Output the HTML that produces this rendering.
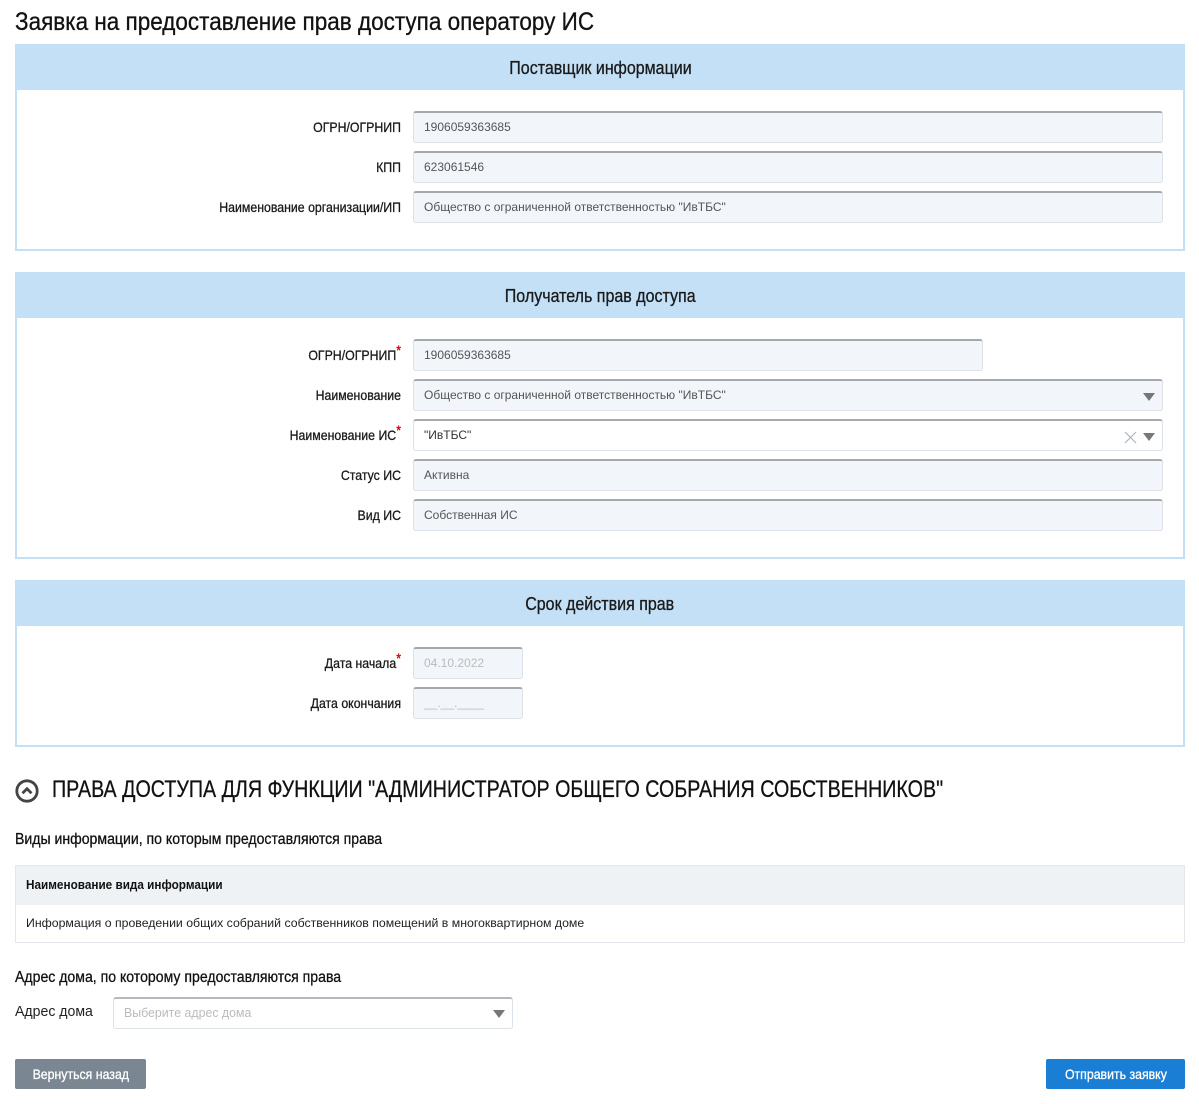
<!DOCTYPE html>
<html><head><meta charset="utf-8">
<style>
*{box-sizing:border-box;margin:0;padding:0}
body{width:1199px;height:1104px;background:#fff;position:relative;overflow:hidden;font-family:"Liberation Sans",sans-serif;color:#111}
.a{position:absolute}
.k{-webkit-text-stroke:0.3px currentColor}
.panel{position:absolute;left:15px;width:1170px;border:2px solid #c3e0f7;border-top:none}
.ph{position:absolute;left:-2px;right:-2px;top:0;height:46px;background:#c3e0f7;text-align:center;font-size:18px;line-height:48px;color:#1a1a1a;-webkit-text-stroke:0.3px #1a1a1a}
.ph span{display:inline-block;transform:scaleX(0.89)}
.lbl{position:absolute;left:0;width:401px;text-align:right;font-size:14px;line-height:32px;color:#1a1a1a;transform:scaleX(0.88);transform-origin:right center;-webkit-text-stroke:0.3px #1a1a1a}
.inp{position:absolute;left:413px;height:32px;background:#f2f5fa;border:1px solid #dde2e8;border-top:2px solid #a5a9ad;border-radius:3px;font-size:12px;line-height:28px;padding-left:10px;color:#555}
.st{color:#c00;font-size:14px;position:relative;top:-5px;-webkit-text-stroke:0.3px #c00}
.tri{position:absolute;right:7px;top:12px;width:0;height:0;border-left:6px solid transparent;border-right:6px solid transparent;border-top:8px solid #777}
.sl{transform-origin:left center}
</style></head><body>
<div class="a sl k" style="left:15px;top:6px;font-size:25px;line-height:32px;color:#111;transform:scaleX(0.9);white-space:nowrap">Заявка на предоставление прав доступа оператору ИС</div>

<div class="panel" style="top:44px;height:207px"><div class="ph"><span>Поставщик информации</span></div></div>
<div class="lbl" style="top:111px">ОГРН/ОГРНИП</div>
<div class="inp" style="top:111px;width:750px">1906059363685</div>
<div class="lbl" style="top:151px">КПП</div>
<div class="inp" style="top:151px;width:750px">623061546</div>
<div class="lbl" style="top:191px">Наименование организации/ИП</div>
<div class="inp" style="top:191px;width:750px">Общество с ограниченной ответственностью "ИвТБС"</div>

<div class="panel" style="top:272px;height:287px"><div class="ph"><span>Получатель прав доступа</span></div></div>
<div class="lbl" style="top:339px">ОГРН/ОГРНИП<span class="st">*</span></div>
<div class="inp" style="top:339px;width:570px">1906059363685</div>
<div class="lbl" style="top:379px">Наименование</div>
<div class="inp" style="top:379px;width:750px">Общество с ограниченной ответственностью "ИвТБС"<div class="tri"></div></div>
<div class="lbl" style="top:419px">Наименование ИС<span class="st">*</span></div>
<div class="inp" style="top:419px;width:750px;background:#fff;color:#333">"ИвТБС"
<svg class="a" style="right:25px;top:10px" width="13" height="13" viewBox="0 0 13 13"><path d="M1 1L12 12M12 1L1 12" stroke="#aab4bf" stroke-width="1.2"/></svg><div class="tri"></div></div>
<div class="lbl" style="top:459px">Статус ИС</div>
<div class="inp" style="top:459px;width:750px">Активна</div>
<div class="lbl" style="top:499px">Вид ИС</div>
<div class="inp" style="top:499px;width:750px">Собственная ИС</div>

<div class="panel" style="top:580px;height:167px"><div class="ph"><span>Срок действия прав</span></div></div>
<div class="lbl" style="top:647px">Дата начала<span class="st">*</span></div>
<div class="inp" style="top:647px;width:110px;color:#bbb">04.10.2022</div>
<div class="lbl" style="top:687px">Дата окончания</div>
<div class="inp" style="top:687px;width:110px;color:#bbb">__.__.____</div>

<svg class="a" style="left:15px;top:779px" width="24" height="24" viewBox="0 0 24 24"><circle cx="12" cy="12" r="10.2" fill="none" stroke="#444" stroke-width="2.8"/><path d="M7.5 14.2L12 9.7L16.5 14.2" fill="none" stroke="#444" stroke-width="2.8"/></svg>
<div class="a sl k" style="left:52px;top:775px;font-size:24px;line-height:30px;color:#111;white-space:nowrap;transform:scaleX(0.82)">ПРАВА ДОСТУПА ДЛЯ ФУНКЦИИ "АДМИНИСТРАТОР ОБЩЕГО СОБРАНИЯ СОБСТВЕННИКОВ"</div>
<div class="a sl k" style="left:15px;top:829px;font-size:16px;line-height:22px;white-space:nowrap;transform:scaleX(0.88)">Виды информации, по которым предоставляются права</div>
<div class="a" style="left:15px;top:865px;width:1170px;height:78px;border:1px solid #e4e8ec">
 <div style="height:39px;background:#eff2f5;font-size:12.5px;font-weight:bold;line-height:39px;padding-left:10px"><span style="display:inline-block;transform:scaleX(0.94);transform-origin:left center">Наименование вида информации</span></div>
 <div style="font-size:12.3px;line-height:36px;padding-left:10px;color:#222">Информация о проведении общих собраний собственников помещений в многоквартирном доме</div>
</div>
<div class="a sl k" style="left:15px;top:967px;font-size:16px;line-height:22px;white-space:nowrap;transform:scaleX(0.88)">Адрес дома, по которому предоставляются права</div>
<div class="a sl" style="left:15px;top:1001px;font-size:15px;line-height:22px;color:#222;transform:scaleX(0.94)">Адрес дома</div>
<div class="a" style="left:113px;top:997px;width:400px;height:32px;border:1px solid #dde2e8;border-top:2px solid #b5b9bd;border-radius:3px;font-size:13px;line-height:28px;padding-left:10px;color:#bbb"><span style="display:inline-block;transform:scaleX(0.95);transform-origin:left center">Выберите адрес дома</span><div class="tri" style="top:11px"></div></div>

<div class="a k" style="left:15px;top:1059px;width:131px;height:30px;background:#7a8793;border-radius:2px;color:#fff;font-size:14px;line-height:30px;text-align:center"><span style="display:inline-block;transform:scaleX(0.88)">Вернуться назад</span></div>
<div class="a k" style="left:1046px;top:1059px;width:139px;height:30px;background:#1a7fd4;border-radius:2px;color:#fff;font-size:14px;line-height:30px;text-align:center"><span style="display:inline-block;transform:scaleX(0.88)">Отправить заявку</span></div>
</body></html>
